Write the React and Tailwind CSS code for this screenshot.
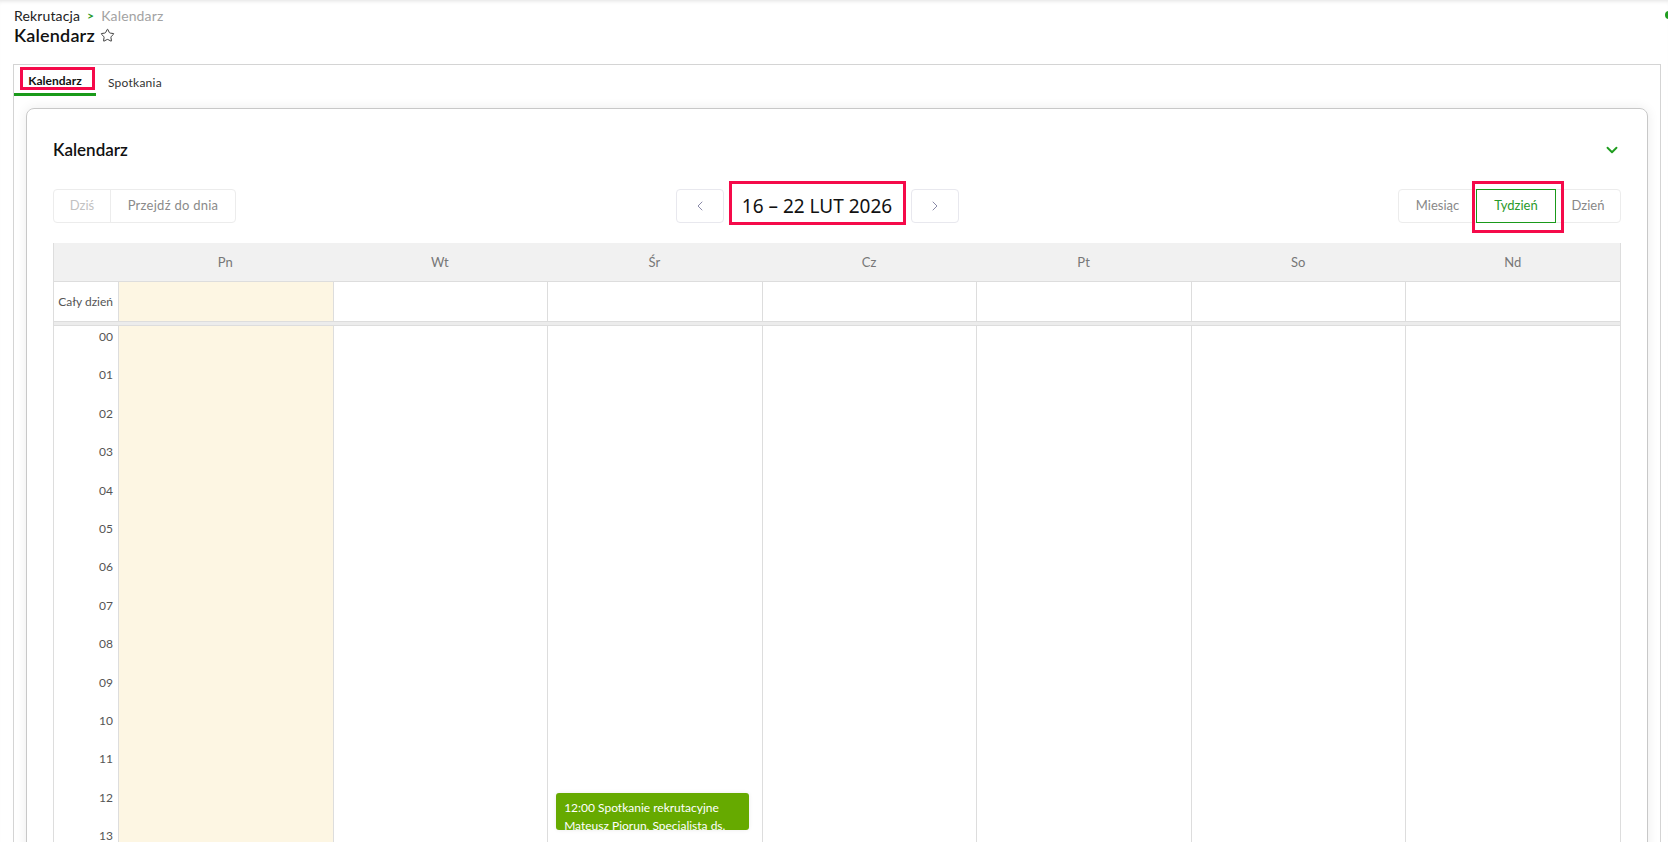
import { Star, ChevronDown, ChevronLeft, ChevronRight } from "lucide-react";

const days = ["Pn", "Wt", "Śr", "Cz", "Pt", "So", "Nd"];
const hours = Array.from({ length: 24 }, (_, i) => String(i).padStart(2, "0"));

export default function App() {
  return (
    <div className="relative h-screen overflow-hidden bg-white text-[#222] font-['Lato','Noto_Sans',sans-serif] shadow-[inset_0_4px_4px_-3px_rgba(0,0,0,0.12)]">
      {/* status dot */}
      <div className="absolute right-[-5px] top-[11px] w-[8px] h-[8px] rounded-full bg-[#1f9d1f]" />

      {/* HEADER */}
      <div className="px-[14px] pt-[8px]">
        <div className="h-[16px] leading-[16px] text-[14px] flex items-center gap-[7px] tracking-[0.01em]">
          <span className="text-[#222]">Rekrutacja</span>
          <span className="text-[#2a9a2a] font-bold text-[12px]">&gt;</span>
          <span className="text-[#a3a3a3]">Kalendarz</span>
        </div>
        <div className="h-[22px] flex items-center gap-[5px]">
          <h1 className="text-[18px] font-semibold leading-[22px] text-[#111] tracking-[0.01em]">Kalendarz</h1>
          <Star size={15} strokeWidth={1.5} className="text-[#333]" />
        </div>
      </div>

      {/* OUTER PANEL */}
      <div className="mt-[18px] ml-[13px] mr-[7px] border border-b-0 border-[#d4d4d4] h-[800px]">
        {/* TABS */}
        <div className="flex h-[31px] text-[12px]">
          <div className="relative w-[82px] border-b-[3px] border-[#1a9a1a] flex items-center justify-center pt-[4px] font-bold text-[#111]">
            Kalendarz
            <span className="absolute left-[6px] right-[1px] top-[2px] bottom-[3px] border-[3px] border-[#f50a4a]" />
          </div>
          <div className="px-[12px] flex items-center pt-[4px] text-[#333] tracking-[0.02em]">Spotkania</div>
        </div>

        {/* CARD */}
        <div className="mt-[12px] mx-[12px] h-[760px] border border-[#c8c8c8] rounded-[8px] px-[26px] pt-[31px] shadow-[0_0_12px_rgba(0,0,0,0.08)]">
          <div className="flex items-center justify-between h-[20px]">
            <h2 className="text-[17px] font-semibold text-[#111]">Kalendarz</h2>
            <ChevronDown size={18} strokeWidth={2.5} className="text-[#1f9d1f]" />
          </div>

          {/* TOOLBAR */}
          <div className="mt-[29px] flex items-center justify-between h-[34px] text-[13px]">
            <div className="flex h-[34px] border border-[#ececec] rounded-[4px]">
              <div className="w-[57px] flex items-center justify-center text-[#c2c2c2] border-r border-[#ececec]">Dziś</div>
              <div className="w-[124px] flex items-center justify-center text-[#8a8a8a] tracking-[0.02em]">Przejdź do dnia</div>
            </div>

            <div className="flex items-center gap-[6px]">
              <button className="w-[48px] h-[34px] border border-[#e8e8ee] rounded-[4px] flex items-center justify-center text-[#8a8aa8]">
                <ChevronLeft size={16} strokeWidth={1.5} />
              </button>
              <div className="relative w-[175px] h-[34px] flex items-center justify-center font-['Noto_Sans',sans-serif] text-[19px] text-[#111]">
                16 – 22 LUT 2026
                <span className="absolute -left-[1px] -right-[1px] -top-[8px] -bottom-[2px] border-[3px] border-[#f50a4a]" />
              </div>
              <button className="w-[48px] h-[34px] border border-[#e8e8ee] rounded-[4px] flex items-center justify-center text-[#8a8aa8]">
                <ChevronRight size={16} strokeWidth={1.5} />
              </button>
            </div>

            <div className="flex h-[34px] border border-[#ececec] rounded-[4px] text-[#888]">
              <div className="w-[77px] flex items-center justify-center">Miesiąc</div>
              <div className="relative w-[80px] -my-px flex items-center justify-center border border-[#1a9a1a] text-[#2a9a2a]">
                Tydzień
                <span className="absolute -left-[5px] -right-[9px] -top-[9px] -bottom-[11px] border-[3px] border-[#f50a4a]" />
              </div>
              <div className="w-[64px] flex items-center justify-center">Dzień</div>
            </div>
          </div>

          {/* CALENDAR GRID */}
          <div className="mt-[20px] border-x border-[#dddddd]">
            <div className="grid grid-cols-[64px_repeat(7,1fr)] h-[39px] pt-[2px] bg-[#f1f1f1] border-b border-[#dddddd] text-[13px] text-[#777]">
              <div />
              {days.map((d) => (
                <div key={d} className="flex items-center justify-center">{d}</div>
              ))}
            </div>

            <div className="grid grid-cols-[64px_repeat(7,1fr)] h-[39px] text-[12px] text-[#555]">
              <div className="flex items-center justify-end pr-[5px]">Cały dzień</div>
              {days.map((d, i) => (
                <div key={d} className={`border-l border-[#dddddd] ${i === 0 ? "bg-[#fdf6e3]" : ""}`} />
              ))}
            </div>

            <div className="h-[5px] border-y border-[#dddddd] bg-[#ececec]" />

            <div className="grid grid-cols-[64px_repeat(7,1fr)] text-[12px] text-[#555]">
              <div className="pt-[5px]">
                {hours.map((h) => (
                  <div key={h} className="h-[38.4px] text-right pr-[5px] leading-[11px]">{h}</div>
                ))}
              </div>
              {days.map((d, i) => (
                <div key={d} className={`relative border-l border-[#dddddd] ${i === 0 ? "bg-[#fdf6e3]" : ""}`}>
                  {i === 2 && (
                    <div className="absolute left-[8px] right-[13px] top-[467px] h-[37px] overflow-hidden rounded-[3px] bg-[#66aa00] px-[8px] pt-[6px] text-white text-[12px] leading-[18px] shadow-[0_0_4px_rgba(0,0,0,0.08)]">
                      <div>12:00 Spotkanie rekrutacyjne</div>
                      <div>Mateusz Piorun, Specjalista ds.</div>
                    </div>
                  )}
                </div>
              ))}
            </div>
          </div>
        </div>
      </div>
    </div>
  );
}
